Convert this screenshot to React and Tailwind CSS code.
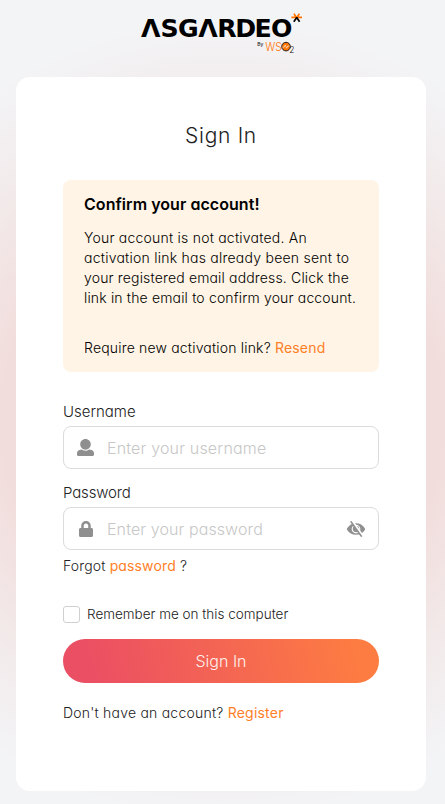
import { FaLock } from "react-icons/fa";

function Logo() {
  return (
    <svg width="166" height="44" viewBox="138 12 166 44" role="img" aria-label="Asgardeo by WSO2" className="block">
      <text x="141 160.5 178 198.3 217.3 235.3 254.4 270.9" y="36.8" fontFamily="DejaVu Sans, sans-serif" fontWeight="700" fontSize="25.2" fill="#000">
        ΛSGΛRDEO
      </text>
      <g strokeWidth="1.7" fill="none">
        <path d="M296.7 18 L294 13.6 M296.7 18 L299.4 13.6 M291.4 17.4 H302" stroke="#ff7300" />
        <path d="M296.7 17.6 L293.8 21.8 M296.7 17.6 L299.6 21.8" stroke="#000" />
      </g>
      <text x="257.3" y="46" fontFamily="Inter, sans-serif" fontWeight="500" fontSize="5" fill="#222">By</text>
      <text x="265.2" y="50.8" fontFamily="Inter, sans-serif" fontWeight="300" fontSize="11.5" textLength="16.5" lengthAdjust="spacingAndGlyphs" fill="#ff7300">WS</text>
      <circle cx="286" cy="46.6" r="4.3" fill="#ff7300" stroke="#222" strokeWidth="1" />
      <path d="M282.5 47.2 H284 L285.2 45 L286.6 48.2 L287.8 46 H289.6" fill="none" stroke="#fff" strokeWidth=".6" />
      <text x="289.3" y="53.4" fontFamily="Inter, sans-serif" fontWeight="300" fontSize="8.5" fill="#111">2</text>
    </svg>
  );
}

function UserIcon() {
  return (
    <svg width="17" height="17" viewBox="0 0 512 512" fill="#8f8f8f">
      <path d="M256 0c88.366 0 160 71.634 160 160s-71.634 160-160 160S96 248.366 96 160 167.634 0 256 0zm183.283 333.821l-71.313-17.828c-74.923 53.89-165.738 41.864-223.94 0l-71.313 17.828C29.981 344.505 0 382.903 0 426.955V464c0 26.51 21.49 48 48 48h416c26.51 0 48-21.49 48-48v-37.045c0-44.052-29.981-82.45-72.717-93.134z" />
    </svg>
  );
}

function EyeSlashIcon() {
  return (
    <svg width="18" height="16" viewBox="0 0 576 512">
      <path d="M6 228C63 135 168 72 288 72s225 63 282 156a48 48 0 0 1 0 56C513 377 408 440 288 440S63 377 6 284a48 48 0 0 1 0-56z" fill="#8f8f8f" />
      <circle cx="288" cy="256" r="122" fill="none" stroke="#fff" strokeWidth="36" />
      <path d="M290 190a66 66 0 0 1 64 66" fill="none" stroke="#fff" strokeWidth="30" />
      <path d="M155 -10 L475 450" stroke="#fff" strokeWidth="80" />
      <path d="M120 12 L470 500" stroke="#8f8f8f" strokeWidth="52" />
    </svg>
  );
}

export default function App() {
  return (
    <div className="flex h-[804px] w-full flex-col items-center overflow-hidden bg-[#f3f4f6] bg-[radial-gradient(circle_at_50%_420px,#f1dbd9_0,#f1dddb_215px,#f2e9e9_300px,#f3f4f6_400px)] font-['Inter',sans-serif] text-sm leading-5 font-[360] text-[#222] [font-feature-settings:'cv11','ss03']">
      <header className="flex h-[77px] w-full justify-center pt-3 pr-[3px]">
        <Logo />
      </header>
      <main className="ml-4 h-[714px] w-[410px] self-start rounded-[14px] bg-white px-[47px] pt-[43px]">
        <h1 className="h-[60px] text-center text-[21px] leading-[31px] font-[330] tracking-[0.7px]">Sign In</h1>
        <section className="h-48 rounded-lg bg-[#fff4e5] px-[21px] pt-[13px] text-black">
          <h2 className="text-base leading-[22px] font-semibold tracking-[0.05px]">Confirm your account!</h2>
          <p className="mt-[13px] tracking-[0.16px] whitespace-nowrap">
            <span className="tracking-[0.22px]">Your account is not activated. An</span><br />
            <span className="tracking-[0.24px]">activation link has already been sent to</span><br />
            your registered email address. Click the<br />
            link in the email to confirm your account.
          </p>
          <p className="mt-[30px] tracking-[0.18px] whitespace-nowrap">
            Require new activation link? <a className="font-normal text-[#ff7f27]">Resend</a>
          </p>
        </section>
        <form>
          <label className="mt-[30px] block text-[15px] leading-5">Username</label>
          <div className="mt-1 flex h-[43px] items-center rounded-lg border border-[#dcdcdc] pl-[13px]">
            <UserIcon />
            <span className="ml-[13px] text-base tracking-[0.18px] text-[#c7c7c7]">Enter your username</span>
          </div>
          <label className="mt-[14px] block text-[15px] leading-5 tracking-[-0.15px]">Password</label>
          <div className="mt-1 flex h-[43px] items-center rounded-lg border border-[#dcdcdc] pr-[13px] pl-[14px]">
            <FaLock size={16} color="#8f8f8f" />
            <span className="ml-[13px] flex-1 text-base tracking-[0.1px] text-[#c7c7c7]">Enter your password</span>
            <EyeSlashIcon />
          </div>
          <p className="mt-[6px] tracking-[0.14px]">
            Forgot <a className="font-normal text-[#ff7f27]">password</a> ?
          </p>
          <div className="mt-7 flex items-center">
            <span className="size-[17px] rounded-[3px] border border-[#d0d0d0]" />
            <span className="ml-[7px] text-[13.5px]">Remember me on this computer</span>
          </div>
          <button type="button" className="mt-[15px] h-11 w-full rounded-full bg-[linear-gradient(77deg,#eb4f63_10%,#fd7c42_92%)] text-base text-[#fff0ec]">
            Sign In
          </button>
          <p className="mt-5 tracking-[0.22px]">
            Don't have an account? <a className="font-normal text-[#ff7f27]">Register</a>
          </p>
        </form>
      </main>
    </div>
  );
}
